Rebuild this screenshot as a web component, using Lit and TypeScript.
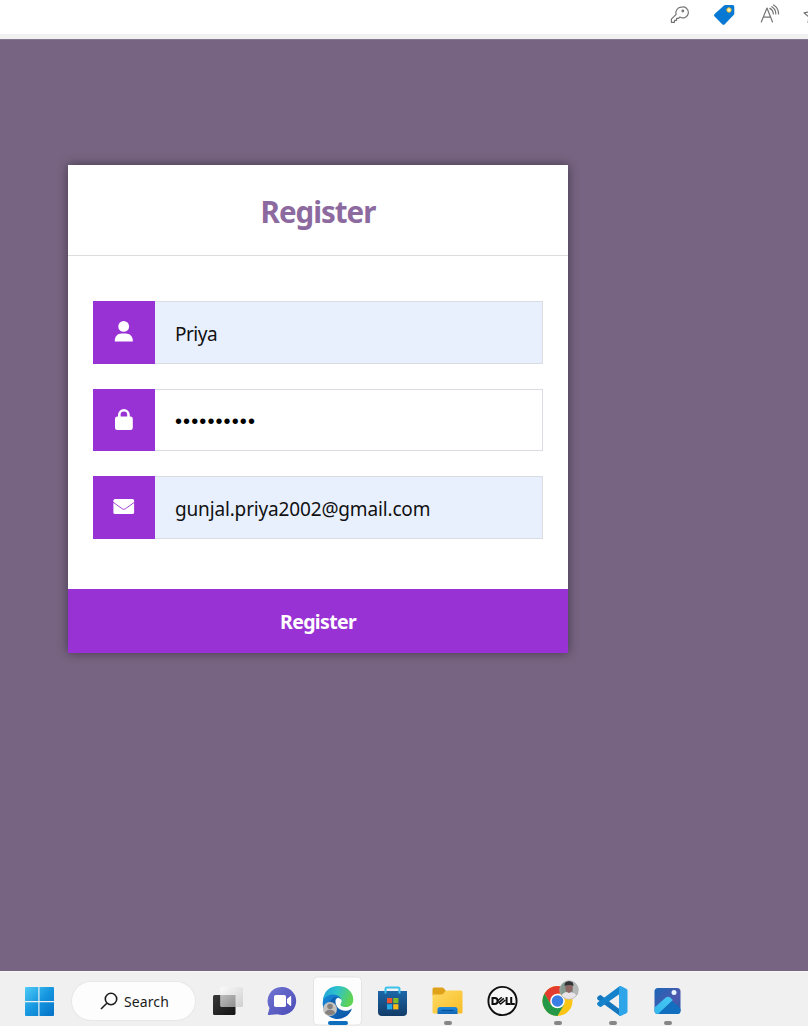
import { LitElement, html, css, svg } from "lit";
import { customElement } from "lit/decorators.js";

const userIcon = html`<svg width="62" height="63" viewBox="0 0 62 63">
  <g fill="#fff"><circle cx="30.7" cy="25.4" r="5.4" /><path d="M21.8 40.6v-1.2c0-4.2 3-7 6.800-7h4.200c3.900 0 7 2.800 7 7v1.200z" /></g>
</svg>`;

const lockIcon = html`<svg width="62" height="62" viewBox="0 0 62 62">
  <rect x="22" y="27.600" width="17.800" height="13.400" rx="2.300" fill="#fff" />
  <path d="M26.300 29v-3.200a4.600 4.600 0 0 1 9.200 0V29" fill="none" stroke="#fff" stroke-width="2.600" />
</svg>`;

const mailIcon = html`<svg width="62" height="63" viewBox="0 0 62 63">
  <rect x="20.400" y="22.900" width="20.700" height="15.200" rx="1.700" fill="#fff" />
  <path d="M20 26.200l9.300 6.600q1.500 1 3 0l9.300-6.600" fill="none" stroke="#9932d4" stroke-width=".9" />
</svg>`;

@customElement("app-root")
export class AppRoot extends LitElement {
  static styles = css`
    :host { display: flex; flex-direction: column; width: 808px; height: 1026px; overflow: hidden;
      font-family: "Noto Sans", "Open Sans", sans-serif; background: #776482; }
    svg { display: block; flex: none; }
    .toolbar { height: 34px; flex: none; background: #fff; border-bottom: 5px solid #f1f1f2;
      display: flex; justify-content: flex-end; }
    .page { flex: 1; padding: 125px 68px 0; border-top: 1px solid #857690; }
    .card { width: 500px; background: #fff; box-shadow: 0 0 10px rgba(0, 0, 0, .45); }
    .head { height: 90px; border-bottom: 1px solid #dddde0; display: flex; justify-content: center;
      align-items: center; color: #8c6a9f; font-size: 29.500px; font-weight: 700; }
    .head span { padding-top: 2px; letter-spacing: -1px; }
    .fields { padding: 45px 25px 50px; display: flex; flex-direction: column; gap: 25px; }
    .field { display: flex; height: 63px; }
    .field.short { height: 62px; }
    .icon { width: 62px; background: #9932d4; }
    .value { flex: 1; box-sizing: border-box; border: 1px solid #d9dce3; border-left: 0; padding: 3px 0 0 20px;
      display: flex; align-items: center; font-size: 19px; color: #111; background: #e8f0fe; }
    .short .value { background: #fff; color: #000; }
    .submit { height: 64px; background: #9932d4; color: #fff; display: flex; justify-content: center;
      align-items: center; font-size: 19.500px; font-weight: 700; }
    .submit span { padding-top: 1px; letter-spacing: -.65px; }
    .name { letter-spacing: -.5px; }
    .mail { letter-spacing: -.16px; }
    .dots { font-family: "Liberation Sans", sans-serif; font-size: 20px; letter-spacing: 1.100px; }
    .taskbar { height: 55px; flex: none; background: #f0f0f1; display: flex; align-items: center; padding-left: 24px;
      box-sizing: border-box; border-top: 1px solid #f8f6f8; }
    .start { margin-top: 5px; }
    .search { width: 123px; height: 38px; margin: 4px 5px 0 17px; border-radius: 20px; background: #fdfdfd;
      box-shadow: 0 0 0 1px #e8e8e9; display: flex; align-items: center; box-sizing: border-box;
      padding-left: 28px; gap: 6px; font-size: 14px; color: #1c1c1c; }
    .search span { letter-spacing: .1px; }
    .app { flex: none; }
  `;

  private task(content: unknown, running = false) {
    return html`<svg class="app" width="55" height="54" viewBox="0 0 55 54">
      ${content}${running ? svg`<rect x="24" y="49" width="8" height="4" rx="2" fill="#868686" />` : null}
    </svg>`;
  }

  render() {
    return html`
      <div class="toolbar">
        <svg width="158" height="34" viewBox="0 0 158 34">
          <g fill="none" stroke="#747474" stroke-width="1.200" stroke-linejoin="round">
            <path d="M31.200 7.200a5.500 5.500 0 0 0-5.100 7.100l-4.700 4.900v3.100h3.100v-2h2.100v-2h2l1.300-1.300a5.500 5.500 0 1 0 1.300-9.800z" />
            <circle cx="32.800" cy="11" r=".8" />
            <path d="M111.300 22l5.700-14 5.500 14M113.300 17.200h7.400M119.800 8.400q3.400 1.800 3.500 5.600M121.800 6.700q4.100 2.300 4 7.300M123.600 5q5 3 5 9" stroke-linecap="round" />
            <path d="M164 9l-5 3-5 .8 4.800 4.200-.7 6" />
          </g>
          <path d="M74 5.500q.6-.5 1.300-.5h7.200q1.800 0 1.800 1.800v6.800q0 .7-.5 1.200l-9 9.400q-1.300 1.300-2.600 0l-7.600-7.600q-1.300-1.300 0-2.600z" fill="#0779d4" />
          <circle cx="79" cy="10" r="2.200" fill="#fff5bb" stroke="#e8b925" stroke-width="1" />
        </svg>
      </div>
      <main class="page">
        <section class="card">
          <div class="head"><span>Register</span></div>
          <div class="fields">
            <div class="field"><div class="icon">${userIcon}</div><div class="value"><span class="name">Priya</span></div></div>
            <div class="field short"><div class="icon">${lockIcon}</div><div class="value"><span class="dots">••••••••••</span></div></div>
            <div class="field"><div class="icon">${mailIcon}</div><div class="value"><span class="mail">gunjal.priya2002@gmail.com</span></div></div>
          </div>
          <div class="submit"><span>Register</span></div>
        </section>
      </main>
      <footer class="taskbar">
        <svg class="start" width="31" height="30" viewBox="0 0 31 30">
          <defs><linearGradient id="w" x1="0" y1="0" x2="30" y2="30" gradientUnits="userSpaceOnUse"><stop stop-color="#50cdf8" /><stop offset=".5" stop-color="#1596df" /><stop offset="1" stop-color="#0570c5" /></linearGradient></defs>
          <path d="M2 0h12.300v14H1V1q0-1 1-1zM15.500 0H29q1 0 1 1v13H15.500zM1 15.200h13.300V29H2q-1 0-1-1zM15.500 15.200H30V28q0 1-1 1H15.500z" fill="url(#w)" />
        </svg>
        <div class="search">
          <svg width="18" height="18" viewBox="0 0 18 18" fill="none" stroke="#1c1c1c" stroke-width="1.600"><circle cx="11" cy="7" r="5.700" /><path d="M6.800 11.200L1 17" /></svg>
          <span>Search</span>
        </div>
        ${this.task(svg`
          <defs>
            <linearGradient id="tv" x2="1" y2="1"><stop stop-color="#393939" /><stop offset="1" stop-color="#141414" /></linearGradient>
            <linearGradient id="tw" x2="1" y2="1"><stop stop-color="#fafafa" /><stop offset="1" stop-color="#cfcfcf" /></linearGradient>
            <linearGradient id="to" x2="1" y2="1"><stop stop-color="#bdbdbd" /><stop offset="1" stop-color="#8f8f8f" /></linearGradient>
          </defs>
          <rect x="13" y="23" width="22.500" height="20" rx="1.500" fill="url(#tv)" />
          <rect x="20.500" y="15" width="22.500" height="20" rx="1.500" fill="url(#tw)" />
          <path d="M20.500 23h15v12h-13.500q-1.500 0-1.500-1.500z" fill="url(#to)" />`)}
        ${this.task(svg`
          <defs><linearGradient id="ch" x2="1" y2="1"><stop stop-color="#7075d2" /><stop offset="1" stop-color="#4b4bb6" /></linearGradient></defs>
          <path d="M27 15a14 14 0 1 1-4.500 27.200L14 43q-1.500 0-1-1.500l1.500-5.500A14 14 0 0 1 27 15z" fill="url(#ch)" />
          <rect x="19" y="23" width="12" height="12" rx="1.800" fill="#fff" />
          <path d="M32 27l3.200-2.800q1-.6 1 .6v8.400q0 1.200-1 .6L32 31z" fill="#fff" />`)}
        ${this.task(svg`
          <defs>
            <linearGradient id="e1" x2="1" y2=".3"><stop stop-color="#1d9fe0" /><stop offset=".5" stop-color="#2fc3c8" /><stop offset="1" stop-color="#5fd355" /></linearGradient>
            <linearGradient id="e2" x2="1" y2="1"><stop stop-color="#178fdd" /><stop offset="1" stop-color="#0b4ba0" /></linearGradient>
          </defs>
          <rect x="3.500" y="5" width="48" height="48" rx="4" fill="#fdfdfd" stroke="#e5e5e6" />
          <path d="M13 29c0-5 4-8.500 9-8.500 5.500 0 9 3 9 7-3 0-4.500 1.500-4.500 3.500 0 5 5.500 8 15.500 5.500A15 15 0 0 1 13 29z" fill="url(#e2)" />
          <path d="M13 28C14 19 20 14 28 14c9 0 15.300 6 15.300 13.500 0 5-3.300 7.700-7.300 7.700-3.500 0-5.700-1-5.700-2.400 0-1 1.200-1.500 1.200-4 0-3-3.500-6.300-8.500-6.300-4.500 0-8 2-10 5.500z" fill="url(#e1)" />
          <path d="M20.500 31c0-3.600 2.700-6 6.500-6-2 1.400-2.600 3.500-2 6 1 4.500 6 7.500 12 7.300 2 0 3.500-.6 4.500-1.200A15 15 0 0 1 30 43.800C24 42 20.500 36.500 20.500 31z" fill="#1160ad" />
          <path d="M25.500 29c0-1.500 1-2.600 2.800-3.200 2.200.7 3.200 2 3 4-.2 1.500-1.300 2-1.300 3 0 1.500 2.500 2.500 6 2.500 3 0 5.200-1.200 6.800-3.200l-1.300 4.800c-7.500 4.500-16 .5-16-7.900z" fill="#fdfdfd" />
          <circle cx="20" cy="37" r="7" fill="#c6c3c0" /><circle cx="20" cy="34.500" r="2.800" fill="#85817e" /><path d="M15 41.500c0-5 10-5 10 0q-5 3.500-10 0z" fill="#85817e" />
          <rect x="18" y="49" width="20" height="4" rx="2" fill="#0d6fbd" />`)}
        ${this.task(svg`
          <defs><linearGradient id="st" x2="0" y2="1"><stop stop-color="#1c67a8" /><stop offset="1" stop-color="#123c69" /></linearGradient></defs>
          <path d="M13 19h29v21q0 4-4 4H17q-4 0-4-4z" fill="url(#st)" />
          <path d="M20.500 21.500v-4.500q0-1.500 1.500-1.500h11q1.500 0 1.500 1.500v4.500" fill="none" stroke="#3cc0ec" stroke-width="2" />
          <path d="M22 26h5.200v5.200H22z" fill="#ef5330" /><path d="M28.200 26h5.200v5.200h-5.200z" fill="#80bc25" /><path d="M22 32.200h5.200v5.200H22z" fill="#24a9e8" /><path d="M28.200 32.200h5.200v5.200h-5.200z" fill="#fdb917" />`)}
        ${this.task(svg`
          <defs><linearGradient id="fo" x2="1" y2="1"><stop stop-color="#ffda65" /><stop offset="1" stop-color="#f7bd25" /></linearGradient><linearGradient id="fb" x2="0" y2="1"><stop stop-color="#1c8bdd" /><stop offset="1" stop-color="#1466b8" /></linearGradient></defs>
          <path d="M12.500 22v-5q0-1.500 1.500-1.500h8q1 0 2 1L26 19v5H12.500z" fill="#dfa01a" />
          <path d="M12.500 22.500h9q1 0 2-1l1.500-2q.6-1 2-1h14q1.500 0 1.500 1.500v20q0 1.500-1.500 1.500H14q-1.500 0-1.500-1.500z" fill="url(#fo)" />
          <path d="M17.500 42v-4.500q0-2.500 2.500-2.500h15q2.500 0 2.500 2.500V42z" fill="url(#fb)" /><path d="M21.500 38.500h12" stroke="#0d4f91" stroke-width="1.200" />`, true)}
        ${this.task(svg`
          <circle cx="27.500" cy="29" r="14.100" fill="#f7f7f7" stroke="#101010" stroke-width="1.900" />
          <g fill="none" stroke="#101010" stroke-width="2"><path d="M17.500 26h2.300q2.800 0 2.800 3t-2.800 3h-2.300zM31.600 25v7h3.400M36.200 25v7h3.600" /><path d="M22.400 29l4.400-3.800M23.800 30.600l5-4.200M25.400 32.200l5-4.200M22.400 29l3.600 3.200" stroke-width="1.500" /></g>`)}
        ${this.task(svg`
          <circle cx="27.500" cy="29" r="15" fill="#fbc516" />
          <path d="M27.500 21.500h13a15 15 0 0 0-26 0L21 32.800z" fill="#e33b2e" />
          <path d="M14.500 21.500A15 15 0 0 0 27.500 44L34 32.800H21z" fill="#249847" />
          <circle cx="27.500" cy="29" r="7.300" fill="#fff" /><circle cx="27.500" cy="29" r="5.800" fill="#3a7ee4" />
          <defs><clipPath id="av"><circle cx="39" cy="18" r="9.300" /></clipPath></defs>
          <g clip-path="url(#av)"><path d="M29 8h20v20H29z" fill="#849a91" /><path d="M43 8h6v20h-6z" fill="#b5bab8" /><path d="M31 28c0-7 3-8 8-8s8 2 8 8z" fill="#e8e4e7" /><ellipse cx="39" cy="16" rx="3.600" ry="5" fill="#8d6663" /><path d="M34.500 14q0-5 4.500-5t4.500 5q-4-2-9 0z" fill="#333438" /></g>
          <circle cx="39" cy="18" r="9.300" fill="none" stroke="#b5b5b5" stroke-width=".6" />`, true)}
        ${this.task(svg`
          <path d="M12.600 24.800l1.700-1.400q1-.7 2 0L35 37.500V44L12.600 27.500q-1.200-1.300 0-2.700z" fill="#1476bd" />
          <path d="M12.600 33.200q-1.200-1.400 0-2.700L34.500 14.200V22L16.300 34.700q-1 .7-2-.1z" fill="#1583cb" />
          <path d="M34 14.200q.8-.5 1.700-.1l5.600 2.700q1.200.6 1.200 2v20.400q0 1.400-1.200 2l-5.600 2.700q-1 .4-1.700-.1z" fill="#2ea4e9" />`, true)}
        ${this.task(svg`
          <defs><linearGradient id="ph" x2="1" y2="1"><stop stop-color="#1766b7" /><stop offset=".6" stop-color="#4e59ae" /><stop offset="1" stop-color="#1760ab" /></linearGradient><linearGradient id="pm" x1="1" x2="0" y2="1"><stop stop-color="#49c8f4" /><stop offset="1" stop-color="#30b6ec" /></linearGradient><clipPath id="pc"><rect x="14.500" y="16" width="26" height="26" rx="3.500" /></clipPath></defs>
          <g clip-path="url(#pc)"><path d="M14 15h27v28H14z" fill="url(#ph)" /><path d="M28 25L47 43H17z" fill="#126fc0" /><path d="M13 37l12.500-11.200q2.500-2 5 0l2.300 2.200L17 43h-4z" fill="url(#pm)" /><circle cx="34" cy="20.500" r="2.500" fill="#e9f6ff" /></g>`, true)}
      </footer>
    `;
  }
}
